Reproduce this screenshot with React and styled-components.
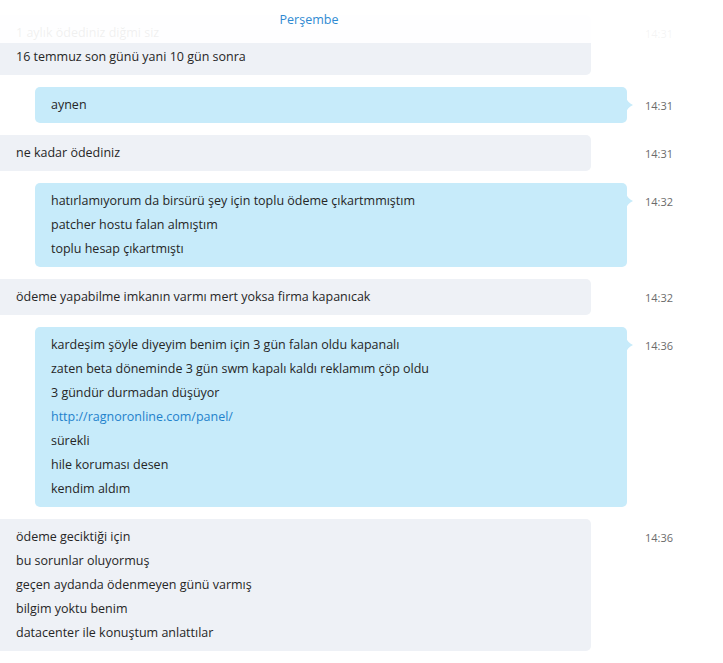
import React from 'react';
import styled, { createGlobalStyle } from 'styled-components';

const messages = [
    { from: 'them', time: '14:31', lines: ['1 aylık ödediniz diğmi siz', '16 temmuz son günü yani 10 gün sonra'] },
    { from: 'me', time: '14:31', lines: ['aynen'] },
    { from: 'them', time: '14:31', lines: ['ne kadar ödediniz'] },
    { from: 'me', time: '14:32', lines: ['hatırlamıyorum da birsürü şey için toplu ödeme çıkartmmıştım', 'patcher hostu falan almıştım', 'toplu hesap çıkartmıştı'] },
    { from: 'them', time: '14:32', lines: ['ödeme yapabilme imkanın varmı mert yoksa firma kapanıcak'] },
    { from: 'me', time: '14:36', lines: ['kardeşim şöyle diyeyim benim için 3 gün falan oldu kapanalı', 'zaten beta döneminde 3 gün swm kapalı kaldı reklamım çöp oldu', '3 gündür durmadan düşüyor', { link: 'http://ragnoronline.com/panel/' }, 'sürekli', 'hile koruması desen', 'kendim aldım'] },
    { from: 'them', time: '14:36', lines: ['ödeme geciktiği için', 'bu sorunlar oluyormuş', 'geçen aydanda ödenmeyen günü varmış', 'bilgim yoktu benim', 'datacenter ile konuştum anlattılar'] },
];

const App = () => {
    return (
        <>
            <GlobalStyle />
            <Chat>
                <DayHeader>
                    <DayLabel>Perşembe</DayLabel>
                </DayHeader>
                {messages.map((m, i) => (
                    <Row key={i}>
                        <Bubble $mine={m.from === 'me'}>
                            {m.from === 'me' && (
                                <Tail viewBox="0 0 8 16" width="8" height="16">
                                    <path d="M0 0 C1 4 3 6 7 8 C3 10 1 12 0 16 Z" fill="#c7ebfa" />
                                </Tail>
                            )}
                            {m.lines.map((l, j) =>
                                typeof l === 'string'
                                    ? <Line key={j}>{l}</Line>
                                    : <Line key={j}><Link href={l.link}>{l.link}</Link></Line>
                            )}
                        </Bubble>
                        <Time>{m.time}</Time>
                    </Row>
                ))}
            </Chat>
        </>
    );
};

const GlobalStyle = createGlobalStyle`
    body {
        margin: 0;
        background: #ffffff;
        font-family: "Open Sans", "Noto Sans", sans-serif;
    }
`;

const Chat = styled.div`
    position: relative;
    display: flex;
    flex-direction: column;
    gap: 12px;
    padding-top: 15px;
    width: 723px;
    height: 663px;
    overflow: hidden;
    box-sizing: border-box;
`;

const DayHeader = styled.div`
    position: absolute;
    top: 0;
    left: 0;
    right: 0;
    height: 43px;
    padding-right: 105px;
    box-sizing: border-box;
    background: rgba(255, 255, 255, 0.93);
    display: flex;
    justify-content: center;
    z-index: 2;
`;

const DayLabel = styled.span`
    margin-top: 11px;
    font-size: 12.5px;
    line-height: 18px;
    color: #2f8ad2;
`;

const Row = styled.div`
    display: flex;
    align-items: flex-start;
`;

const Bubble = styled.div`
    position: relative;
    box-sizing: border-box;
    width: ${p => p.$mine ? '592px' : '591px'};
    margin-left: ${p => p.$mine ? '35px' : '0'};
    margin-right: ${p => p.$mine ? '0' : '36px'};
    padding: 6px 16px;
    background: ${p => p.$mine ? '#c7ebfa' : '#eef1f6'};
    border-radius: ${p => p.$mine ? '5px' : '0 5px 5px 0'};
`;

const Tail = styled.svg`
    position: absolute;
    top: 10px;
    right: -7px;
`;

const Line = styled.div`
    font-size: 12.5px;
    line-height: 24px;
    color: #262626;
    white-space: nowrap;
`;

const Link = styled.a`
    color: #1f82cc;
    text-decoration: none;
`;

const Time = styled.div`
    margin-left: 18px;
    padding-top: 11px;
    font-size: 11px;
    line-height: 16px;
    color: #6b6b6b;
`;

export default App;
